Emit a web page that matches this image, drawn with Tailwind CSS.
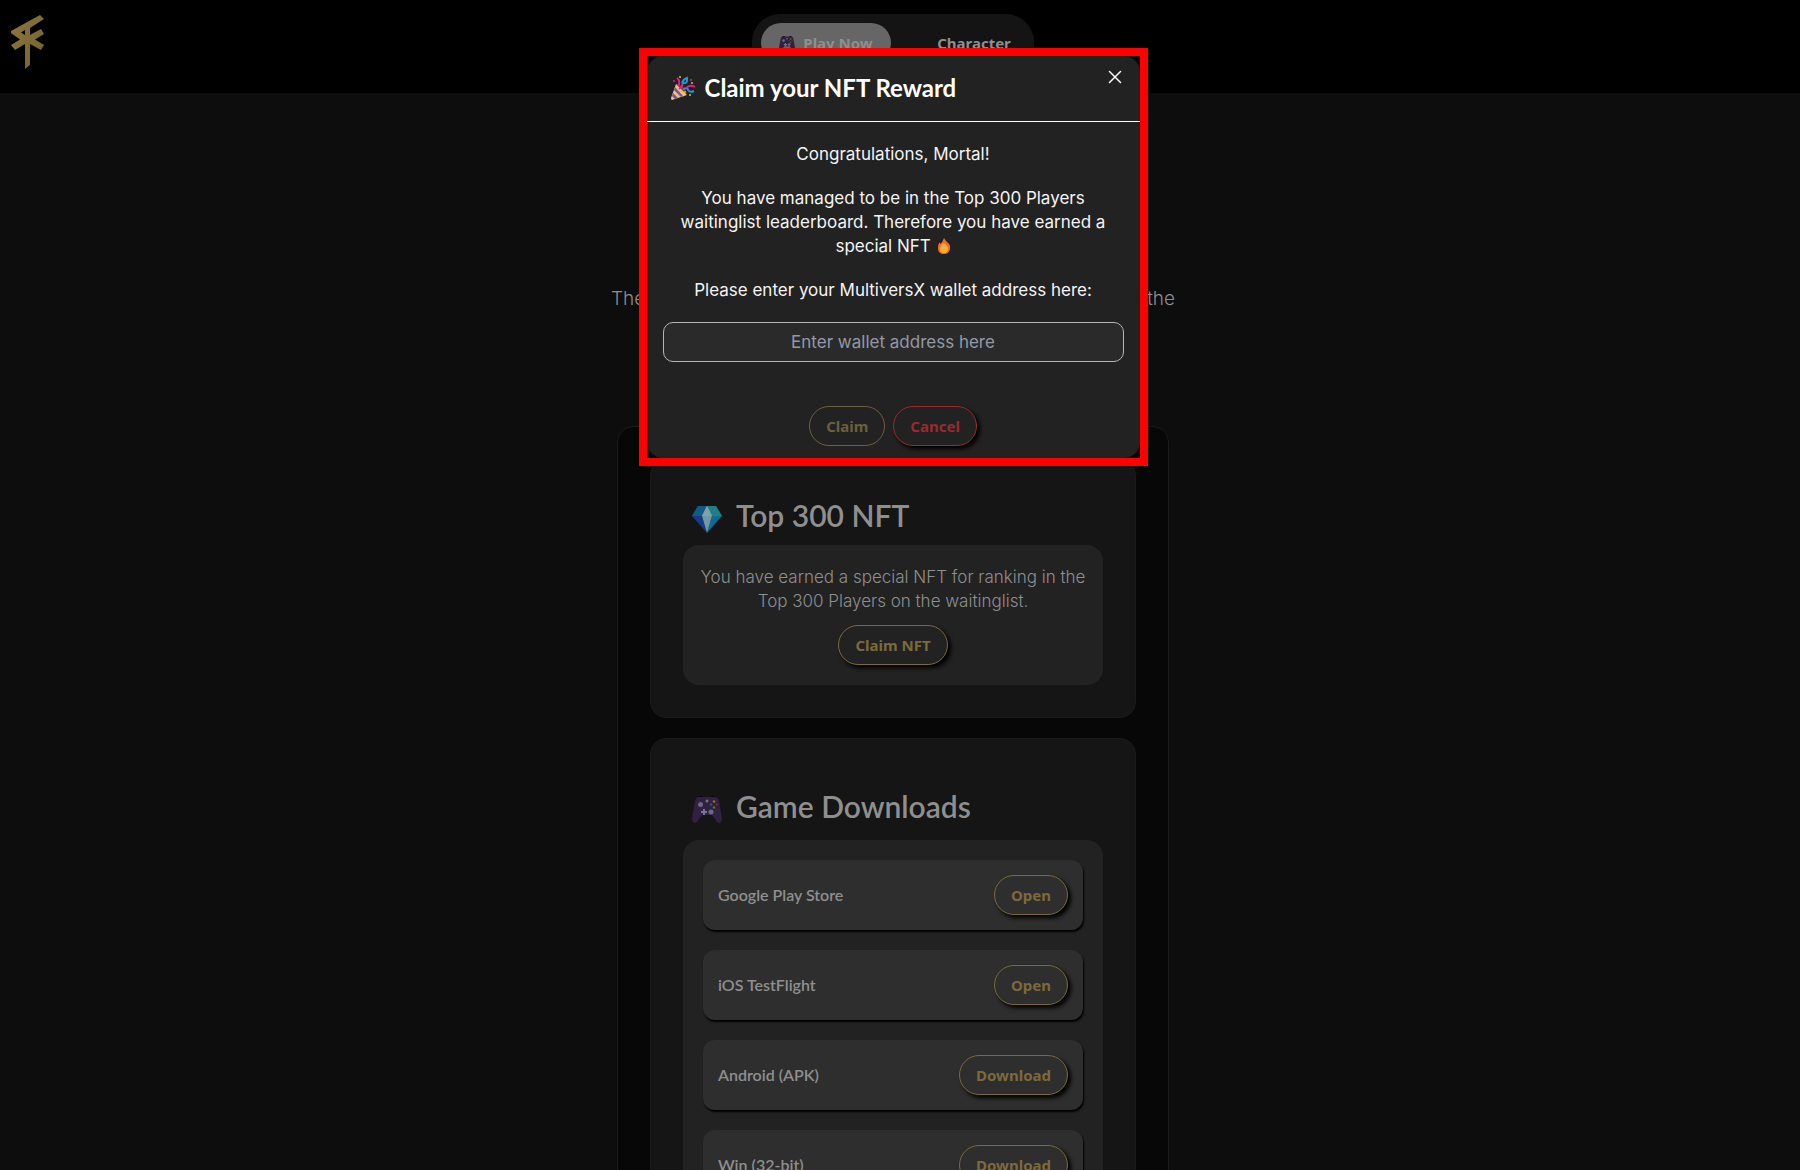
<!DOCTYPE html>
<html lang="en">
<head>
    <meta charset="UTF-8">
    <meta name="viewport" content="width=device-width, initial-scale=1.0">
    <script src="https://cdn.jsdelivr.net/npm/@tailwindcss/browser@4"></script>
    <title>Claim your NFT Reward</title>
</head>
<body class="h-screen overflow-hidden bg-[#0d0d0d] font-['Inter',sans-serif] text-[17px] text-[#8f8f8f]">
    <!-- Icons -->
    <svg class="hidden">
        <symbol id="gamepad" viewBox="0 0 30 28">
            <path d="M6 2.5Q8 0 11 1.5V4H5zM24 2.5Q22 0 19 1.5V4H25z" fill="#08060b"/>
            <path d="M7 2H23Q26 2 27 6L30 23Q30 28 27 28Q25 28 23 24L20 20H10L7 24Q5 28 3 28Q0 28 0 23L3 6Q4 2 7 2Z" fill="#312040"/>
            <circle cx="8.500" cy="9.500" r="2.500" fill="#6a6783"/>
            <circle cx="19" cy="17" r="2.500" fill="#6a6783"/>
            <circle cx="15" cy="6" r="1.500" fill="#77747f"/>
            <path d="M11 14H13V16H15V18H13V20H11V18H9V16H11Z" fill="#77749a"/>
            <circle cx="22" cy="6.500" r="1.300" fill="#8b7c20"/>
            <circle cx="25" cy="9.500" r="1.300" fill="#7d2020"/>
            <circle cx="22" cy="12.500" r="1.300" fill="#4f7d20"/>
            <circle cx="19" cy="9.500" r="1.300" fill="#1f5f80"/>
        </symbol>
    </svg>

    <header class="h-[93px] bg-black pt-[14px] pr-[14px] grid grid-cols-[1fr_auto_1fr] items-start">
        <a href="#" aria-label="Home" class="ml-[11px] w-9">
            <svg class="w-[34px] h-[56px]" viewBox="0 0 34 56">
                <defs>
                    <linearGradient id="gold" x1="0" y1="0" x2="1" y2="1">
                        <stop offset="0" stop-color="#8c7640"/>
                        <stop offset="1" stop-color="#75612f"/>
                    </linearGradient>
                </defs>
                <path fill="url(#gold)" fill-rule="evenodd" d="M29 1L33 5L19 14V21L30 15L33 20L24 25.500L33 31L30 36L19 30V51L14 55V30L4 36L0 31L9 25.500L0 19V17ZM14 16L10 18.500L14 21Z"/>
            </svg>
        </a>
        <nav class="flex h-[70px] w-[282px] items-start rounded-[28px] bg-[#141414] p-[9px] font-['Noto_Sans',sans-serif] text-[15px] font-bold">
            <a href="#" class="flex h-10 w-[130px] items-center justify-center gap-2 rounded-full bg-[#666]">
                <svg class="size-4"><use href="#gamepad"/></svg>
                Play Now
            </a>
            <a href="#" class="flex h-10 flex-1 items-center justify-center pl-8">Character</a>
        </nav>
    </header>

    <main class="pr-[14px]">
        <div class="mx-auto flex w-[564px] justify-between pt-[192px] text-[19px] leading-7 font-light">
            <span>The</span>
            <span>the</span>
        </div>

        <div class="mx-auto mt-[113px] w-[552px] rounded-2xl border border-[#1a1a1a] bg-[#070707] px-8 pt-8 pb-8">
            <section class="mb-5 rounded-2xl border border-[#1a1a1a] bg-[#151515] px-8 pt-8 pb-8">
                <h2 class="flex h-[53px] items-center gap-[14px] pb-[6px] pl-[9px] font-['Lato',sans-serif] text-[30px] font-semibold">
                    <svg class="mt-1 size-[30px]" viewBox="0 0 30 30">
                        <path d="M6 3H24L30 13H0Z" fill="#14637f"/>
                        <path d="M6 3H15L10 13H0Z" fill="#125b86"/>
                        <path d="M15 3H24L30 13H20Z" fill="#1c8287"/>
                        <path d="M0 13H10L15 30Z" fill="#163c86"/>
                        <path d="M20 13H30L15 30Z" fill="#116a92"/>
                        <path d="M15 3L20 13L15 30L10 13Z" fill="#7298a5"/>
                        <path d="M15 3L20 13H10Z" fill="#7fa3a8"/>
                    </svg>
                    Top 300 NFT
                </h2>
                <div class="flex flex-col items-center gap-3 rounded-2xl bg-[#222] p-5 text-center leading-6">
                    <p class="font-light whitespace-nowrap">You have earned a special NFT for ranking in the<br>Top 300 Players on the waitinglist.</p>
                    <button class="h-10 rounded-[20px] border border-[#7d6a3a] px-4 font-['Noto_Sans',sans-serif] text-[15px] font-bold text-[#7d6a3a] shadow-[3px_3px_4px_#000] bg-[#222]">Claim NFT</button>
                </div>
            </section>

            <section class="rounded-2xl border border-[#1a1a1a] bg-[#151515] px-8 pt-11 pb-8">
                <h2 class="mb-1 flex h-[53px] items-center gap-[14px] pb-[6px] pl-[9px] font-['Lato',sans-serif] text-[30px] font-semibold">
                    <svg class="mt-1 size-[30px]"><use href="#gamepad"/></svg>
                    Game Downloads
                </h2>
                <ul class="flex flex-col gap-5 rounded-2xl bg-[#222] p-5">
                    <li class="flex h-[70px] items-center justify-between rounded-xl bg-[#2e2e2e] px-[15px] shadow-[1px_2px_2px_#000]">
                        <span class="font-['Lato',sans-serif] text-base font-semibold">Google Play Store</span>
                        <button class="h-10 rounded-[20px] border border-[#7d6a3a] px-4 font-['Noto_Sans',sans-serif] text-[15px] font-bold text-[#7d6a3a] shadow-[3px_3px_4px_#000] bg-[#2e2e2e]">Open</button>
                    </li>
                    <li class="flex h-[70px] items-center justify-between rounded-xl bg-[#2e2e2e] px-[15px] shadow-[1px_2px_2px_#000]">
                        <span class="font-['Lato',sans-serif] text-base font-semibold">iOS TestFlight</span>
                        <button class="h-10 rounded-[20px] border border-[#7d6a3a] px-4 font-['Noto_Sans',sans-serif] text-[15px] font-bold text-[#7d6a3a] shadow-[3px_3px_4px_#000] bg-[#2e2e2e]">Open</button>
                    </li>
                    <li class="flex h-[70px] items-center justify-between rounded-xl bg-[#2e2e2e] px-[15px] shadow-[1px_2px_2px_#000]">
                        <span class="font-['Lato',sans-serif] text-base font-semibold">Android (APK)</span>
                        <button class="h-10 rounded-[20px] border border-[#7d6a3a] px-4 font-['Noto_Sans',sans-serif] text-[15px] font-bold text-[#7d6a3a] shadow-[3px_3px_4px_#000] bg-[#2e2e2e]">Download</button>
                    </li>
                    <li class="flex h-[70px] items-center justify-between rounded-xl bg-[#2e2e2e] px-[15px] shadow-[1px_2px_2px_#000]">
                        <span class="font-['Lato',sans-serif] text-base font-semibold">Win (32-bit)</span>
                        <button class="h-10 rounded-[20px] border border-[#7d6a3a] px-4 font-['Noto_Sans',sans-serif] text-[15px] font-bold text-[#7d6a3a] shadow-[3px_3px_4px_#000] bg-[#2e2e2e]">Download</button>
                    </li>
                </ul>
            </section>
        </div>
    </main>

    <!-- Claim dialog -->
    <div class="fixed inset-x-0 top-12 flex justify-center pr-[14px]">
        <div role="dialog" aria-labelledby="claim-title" class="w-[509px] border-8 border-[#f00] bg-[#060606] text-white">
            <div class="relative rounded-2xl bg-[#222]">
                <div class="flex h-[66px] items-center gap-[10px] border-b border-white px-6 pb-[2px]">
                    <svg class="size-6" viewBox="0 0 24 24">
                        <path d="M6 8Q13 10 16 17L12 21Z" fill="#70452f"/>
                        <path d="M5 8L16 19L1 24Q0 24 0 22Z" fill="#f2c078"/>
                        <path d="M4 11L12 20L10 21L3 14ZM2 17L7 22L4 23L1 20Z" fill="#685aa6"/>
                        <path d="M6 2Q10 5 7 10M8 13Q13 10 11 5" fill="none" stroke="#e0218a" stroke-width="2"/>
                        <path d="M12 7Q11 4 16 2Q17 8 12 7M12 13Q17 11 17 14Q19 17 23 15" fill="none" stroke="#1c9bd8" stroke-width="2"/>
                        <path d="M15 12Q19 8 24 11" fill="none" stroke="#e0218a" stroke-width="2"/>
                        <g fill="#f5b52e"><circle cx="9" cy="1" r="1"/><circle cx="21" cy="7" r="1"/><circle cx="19" cy="19" r="1"/><circle cx="14" cy="16" r="1"/></g>
                        <g fill="#e0218a"><circle cx="3" cy="5" r="1"/><circle cx="20" cy="4" r="1"/></g>
                    </svg>
                    <h1 id="claim-title" class="font-['Lato',sans-serif] text-[24px] font-bold">Claim your NFT Reward</h1>
                </div>
                <button aria-label="Close" class="absolute top-[14px] right-[18px]">
                    <svg class="block size-[14px]" viewBox="0 0 14 14" fill="none" stroke="#fff" stroke-width="1.500" stroke-linecap="round"><path d="M1.500 1.500L12.500 12.500M12.500 1.500L1.500 12.500"/></svg>
                </button>

                <div class="flex flex-col gap-5 px-4 pt-5 text-center leading-6 text-[#f4f4f4]">
                    <p>Congratulations, Mortal!</p>
                    <p>
                        You have managed to be in the Top 300 Players<br>
                        waitinglist leaderboard. Therefore you have earned a<br>
                        special NFT
                        <svg class="ml-px inline h-4 w-[14px] align-[-2px]" viewBox="0 0 14 16">
                            <path d="M7 0Q8 2 10 4Q14 7 13 11Q12 16 7 16Q1 16 1 10Q1 6 3 4V6Q6 4 7 0Z" fill="#f36c27"/>
                            <path d="M7 5Q11 8 11 11Q11 15 7 15Q3 15 3 11Q3 8 7 5Z" fill="#ffb02e"/>
                        </svg>
                    </p>
                    <label for="wallet">Please enter your MultiversX wallet address here:</label>
                    <input id="wallet" type="text" placeholder="Enter wallet address here" class="h-10 w-full rounded-[10px] border border-[#b5b5b5] bg-[#2a2a2a] text-center placeholder:text-[#9299a8]">
                </div>
                <div class="flex justify-center gap-2 pt-11 pb-3 font-['Noto_Sans',sans-serif] text-[15px] font-bold">
                    <button class="h-10 rounded-[20px] border border-[#6c603c] px-4 text-[#6c603c]">Claim</button>
                    <button class="h-10 rounded-[20px] border border-[#9b2a2e] bg-[#222] px-4 text-[#9b2a2e] shadow-[3px_3px_4px_#000]">Cancel</button>
                </div>
            </div>
        </div>
    </div>
</body>
</html>
